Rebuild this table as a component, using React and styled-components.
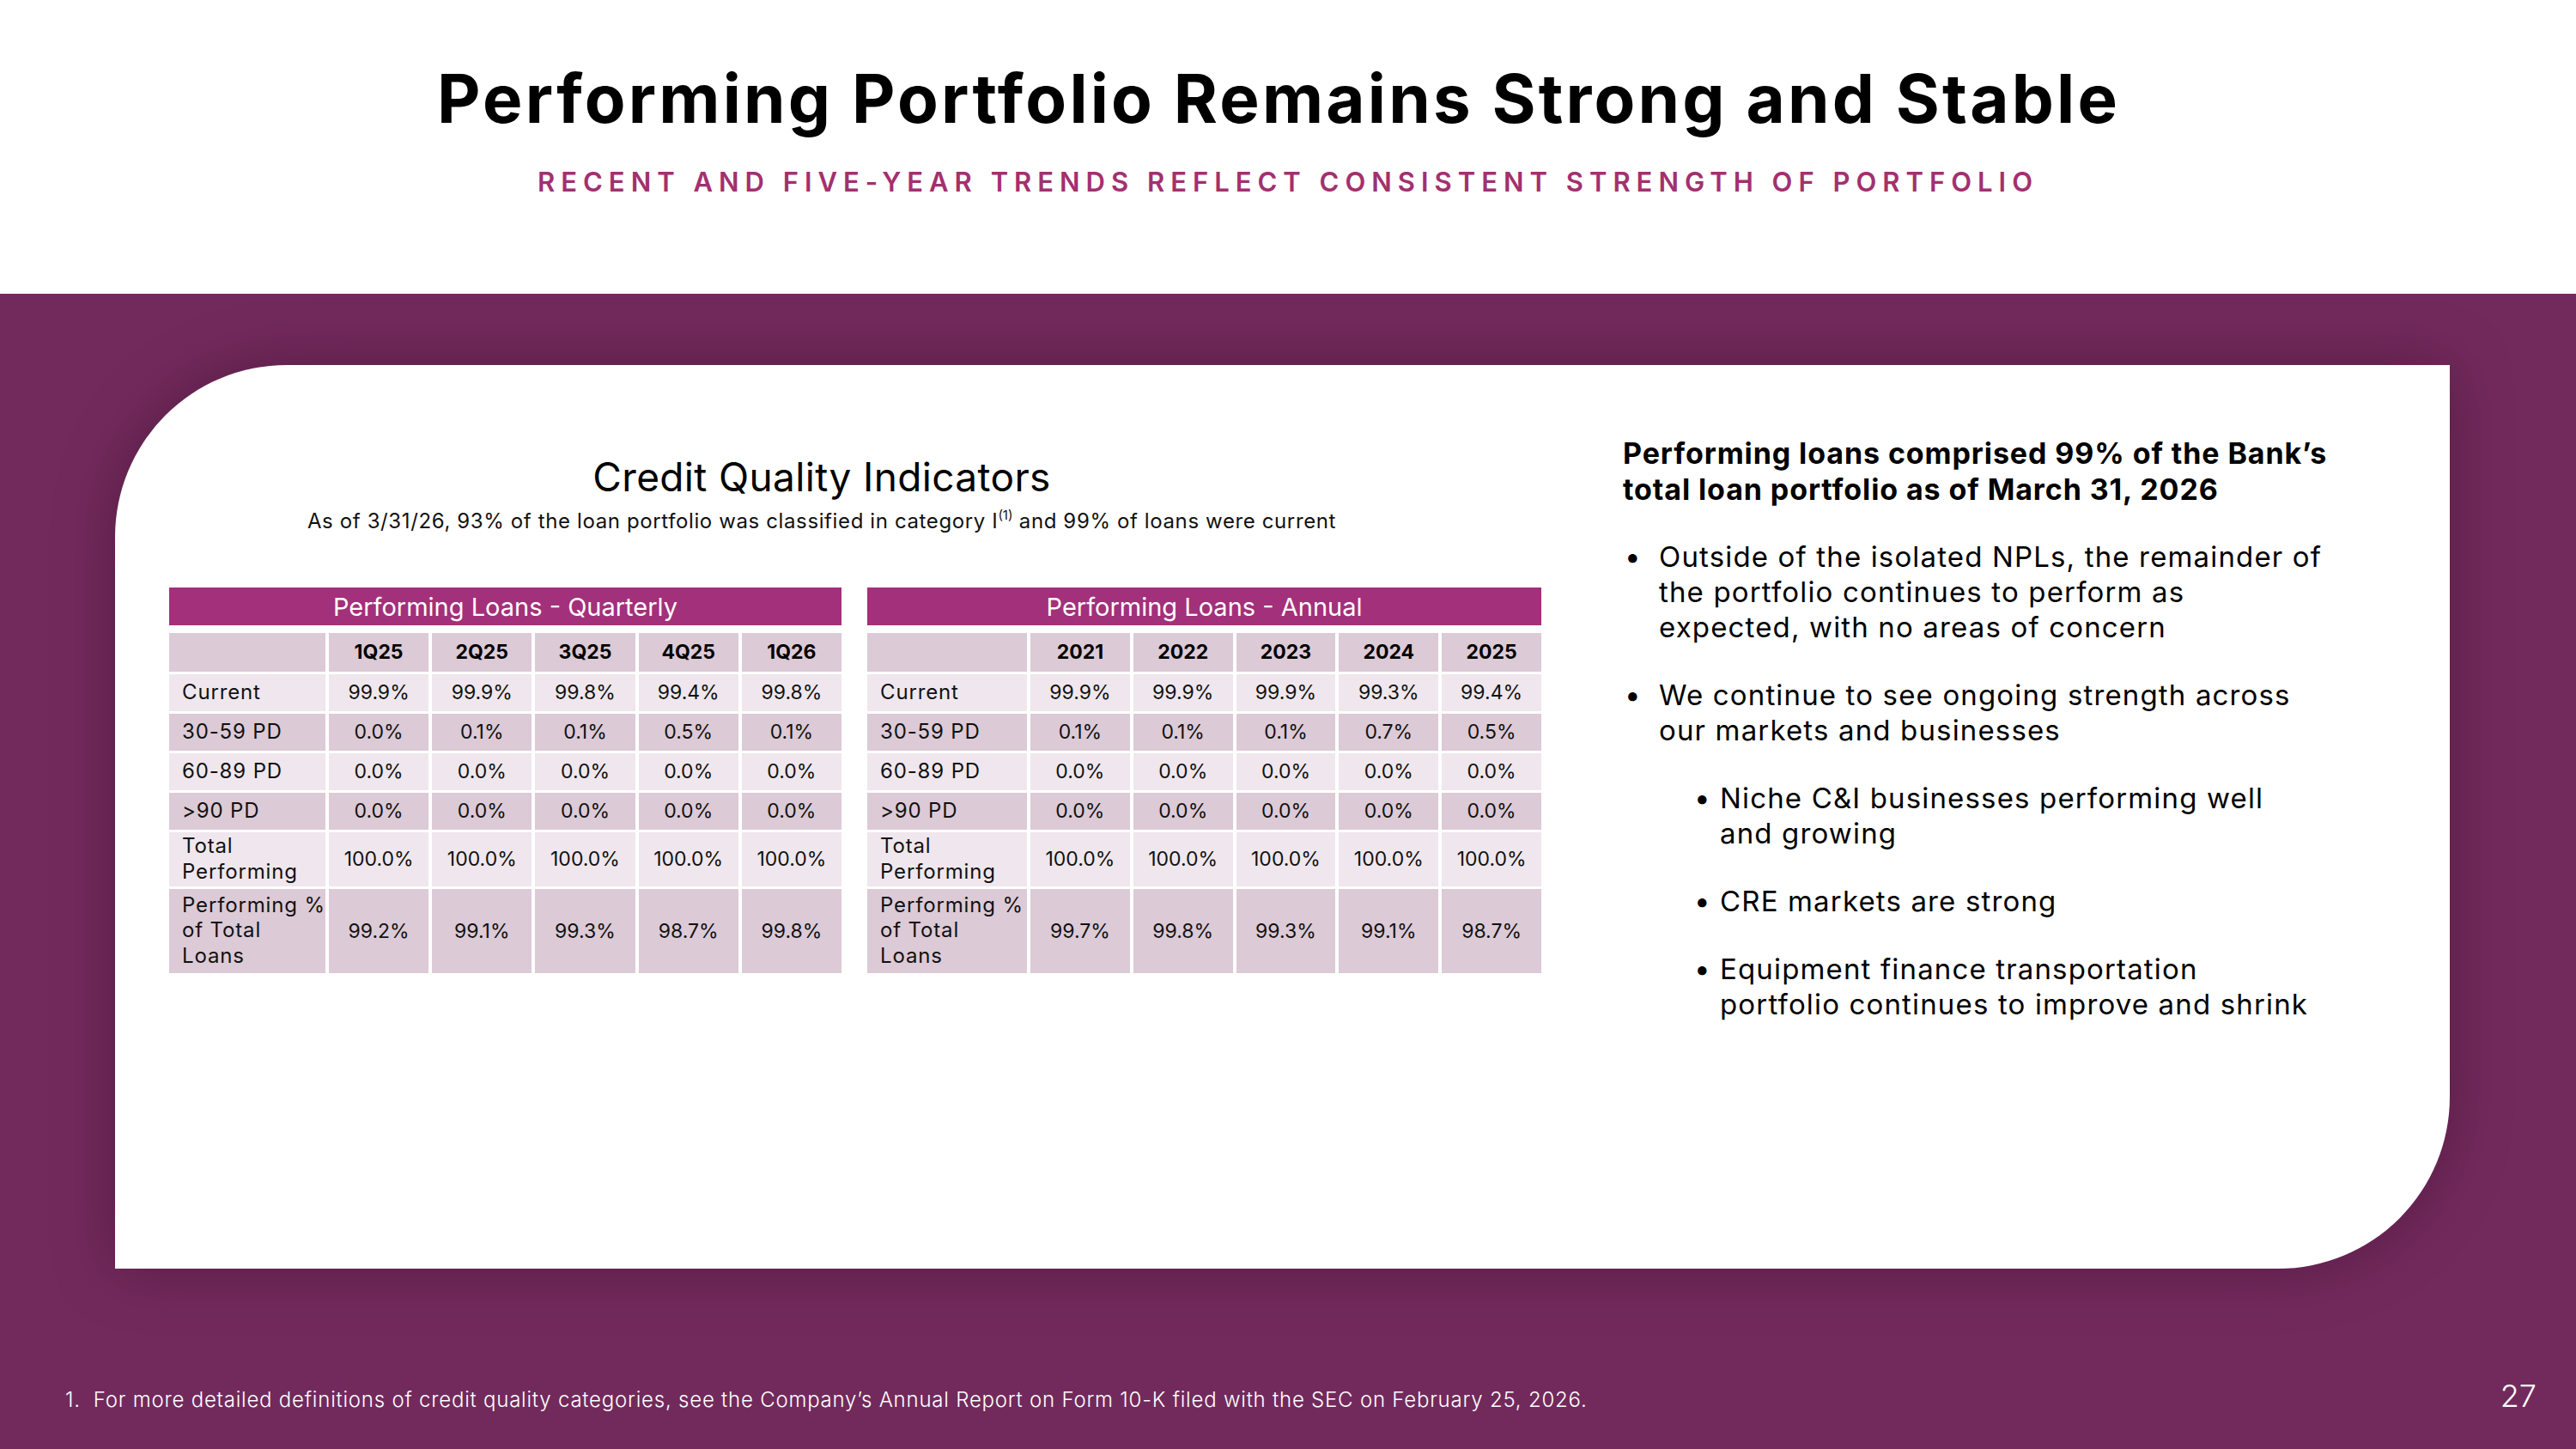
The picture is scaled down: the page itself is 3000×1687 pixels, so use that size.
import React from "react";
import styled, { createGlobalStyle } from "styled-components";

const GlobalStyle = createGlobalStyle`
  html, body { margin: 0; padding: 0; }
  body {
    width: 3000px;
    height: 1687px;
    overflow: hidden;
    background: #ffffff;
    font-family: Inter, "Open Sans", "Liberation Sans", sans-serif;
    color: #111;
  }
  * { box-sizing: border-box; }
`;

const Slide = styled.div`
  width: 3000px;
  height: 1687px;
  display: flex;
  flex-direction: column;
  background: #ffffff;
`;

const Header = styled.header`
  height: 342px;
  display: flex;
  flex-direction: column;
  align-items: center;
  padding-top: 69px;
`;

const Title = styled.h1`
  margin: 0 22px 0 0;
  font-family: Inter, sans-serif;
  font-weight: 700;
  font-size: 78px;
  line-height: 92px;
  letter-spacing: 3.2px;
  color: #000;
`;

const Subtitle = styled.p`
  margin: 31px 0 0;
  font-family: Inter, sans-serif;
  font-weight: 600;
  font-size: 31px;
  line-height: 40px;
  letter-spacing: 7px;
  color: #a3306f;
`;

const Band = styled.section`
  flex: 1;
  display: flex;
  flex-direction: column;
  background: #722a5c;
  padding-top: 83px;
`;

const Card = styled.div`
  margin: 0 147px 0 134px;
  height: 1052px;
  background: #ffffff;
  border-radius: 200px 0 200px 0;
  box-shadow: 0 0 70px rgba(40, 5, 30, 0.35);
  display: grid;
  grid-template-columns: 1598px 1fr;
  column-gap: 95px;
  padding-left: 63px;
`;

const LeftPane = styled.div`
  display: flex;
  flex-direction: column;
  padding-top: 104px;
`;

const PaneHeading = styled.div`
  display: flex;
  flex-direction: column;
  align-items: center;
  padding-right: 78px;
`;

const PaneTitle = styled.h2`
  margin: 0;
  font-family: Inter, sans-serif;
  font-weight: 400;
  font-size: 46px;
  line-height: 52px;
  letter-spacing: 0.35px;
  color: #000;
`;

const PaneNote = styled.p`
  margin: 11px 0 0;
  font-family: Inter, sans-serif;
  font-weight: 400;
  font-size: 24px;
  line-height: 30px;
  letter-spacing: 0.62px;
  color: #111;

  sup {
    font-size: 15px;
    line-height: 0;
    vertical-align: 10px;
    letter-spacing: 0;
  }
`;

const Tables = styled.div`
  margin-top: 62px;
  display: flex;
  gap: 30px;
`;

const TableGrid = styled.div`
  width: ${(p) => p.$width}px;
  display: grid;
  grid-template-columns: ${(p) => p.$labelWidth}px repeat(5, 1fr);
  grid-template-rows: 50px 45px repeat(4, 43px) 63px 98px;
  column-gap: 4px;
  row-gap: 3px;
  font-family: Inter, sans-serif;
  font-size: 23px;
  line-height: 29px;
  color: #111;
`;

const Banner = styled.div`
  grid-column: 1 / -1;
  margin-bottom: 6px;
  display: flex;
  align-items: center;
  justify-content: center;
  background: #a3307a;
  color: #ffffff;
  font-size: 29px;
  font-weight: 400;
`;

const Cell = styled.div`
  padding: ${(p) => (p.$label ? "0 2px 2px 15px" : "0 2px")};
  display: flex;
  flex-direction: column;
  align-items: ${(p) => (p.$label ? "flex-start" : "center")};
  justify-content: center;
  background: ${(p) => (p.$shade ? "#dccad6" : "#efe7ed")};
  font-size: ${(p) => (p.$label ? "24px" : "23px")};
  line-height: ${(p) => (p.$label ? "29.5px" : "29px")};
  letter-spacing: ${(p) => (p.$label ? "0.85px" : "0")};
  font-weight: ${(p) => (p.$bold ? 700 : 400)};
  color: ${(p) => (p.$bold ? "#000" : "#111")};
  white-space: nowrap;
`;

const RightPane = styled.div`
  padding-top: 82px;
  font-family: Inter, sans-serif;
  color: #000;
`;

const Lead = styled.p`
  margin: 0;
  font-weight: 700;
  font-size: 34px;
  line-height: 42px;
  letter-spacing: 0.9px;
`;

const BulletList = styled.ul`
  list-style: none;
  margin: 37px 0 0;
  padding: 0;
  display: flex;
  flex-direction: column;
  gap: 38px;
`;

const Bullet = styled.li`
  position: relative;
  padding-left: ${(p) => (p.$sub ? 113 : 42)}px;
  font-size: 33px;
  line-height: 41px;
  letter-spacing: 1.15px;
  font-weight: 400;
  white-space: nowrap;

  &::before {
    content: "•";
    position: absolute;
    left: ${(p) => (p.$sub ? 83 : 2)}px;
    top: 0;
  }
`;

const Footer = styled.footer`
  margin-top: auto;
  padding: 0 46px 40px 76px;
  display: flex;
  justify-content: space-between;
  align-items: baseline;
  color: #ffffff;
  font-family: Inter, sans-serif;
`;

const FootNote = styled.p`
  margin: 0;
  font-size: 24px;
  font-weight: 300;
  line-height: 30px;
  letter-spacing: 0.78px;
`;

const PageNumber = styled.span`
  font-size: 36px;
  font-weight: 300;
`;

const quarterly = {
  title: "Performing Loans - Quarterly",
  cols: ["1Q25", "2Q25", "3Q25", "4Q25", "1Q26"],
  rows: [
    [["Current"], "99.9%", "99.9%", "99.8%", "99.4%", "99.8%"],
    [["30-59 PD"], "0.0%", "0.1%", "0.1%", "0.5%", "0.1%"],
    [["60-89 PD"], "0.0%", "0.0%", "0.0%", "0.0%", "0.0%"],
    [[">90 PD"], "0.0%", "0.0%", "0.0%", "0.0%", "0.0%"],
    [["Total", "Performing"], "100.0%", "100.0%", "100.0%", "100.0%", "100.0%"],
    [["Performing %", "of Total", "Loans"], "99.2%", "99.1%", "99.3%", "98.7%", "99.8%"],
  ],
};

const annual = {
  title: "Performing Loans - Annual",
  cols: ["2021", "2022", "2023", "2024", "2025"],
  rows: [
    [["Current"], "99.9%", "99.9%", "99.9%", "99.3%", "99.4%"],
    [["30-59 PD"], "0.1%", "0.1%", "0.1%", "0.7%", "0.5%"],
    [["60-89 PD"], "0.0%", "0.0%", "0.0%", "0.0%", "0.0%"],
    [[">90 PD"], "0.0%", "0.0%", "0.0%", "0.0%", "0.0%"],
    [["Total", "Performing"], "100.0%", "100.0%", "100.0%", "100.0%", "100.0%"],
    [["Performing %", "of Total", "Loans"], "99.7%", "99.8%", "99.3%", "99.1%", "98.7%"],
  ],
};

function LoanTable({ data, width, labelWidth }) {
  return (
    <TableGrid $width={width} $labelWidth={labelWidth}>
      <Banner>{data.title}</Banner>
      <Cell $label $shade />
      {data.cols.map((c) => (
        <Cell key={c} $shade $bold>
          {c}
        </Cell>
      ))}
      {data.rows.map(([label, ...values], i) => {
        const shade = i % 2 === 1;
        return (
          <React.Fragment key={i}>
            <Cell $label $shade={shade}>
              {label.map((line) => (
                <span key={line}>{line}</span>
              ))}
            </Cell>
            {values.map((v, j) => (
              <Cell key={j} $shade={shade}>
                {v}
              </Cell>
            ))}
          </React.Fragment>
        );
      })}
    </TableGrid>
  );
}

export default function App() {
  return (
    <>
      <GlobalStyle />
      <Slide>
        <Header>
          <Title>Performing Portfolio Remains Strong and Stable</Title>
          <Subtitle>RECENT AND FIVE-YEAR TRENDS REFLECT CONSISTENT STRENGTH OF PORTFOLIO</Subtitle>
        </Header>
        <Band>
          <Card>
            <LeftPane>
              <PaneHeading>
                <PaneTitle>Credit Quality Indicators</PaneTitle>
                <PaneNote>
                  As of 3/31/26, 93% of the loan portfolio was classified in category I<sup>(1)</sup> and 99% of loans were current
                </PaneNote>
              </PaneHeading>
              <Tables>
                <LoanTable data={quarterly} width={783} labelWidth={182} />
                <LoanTable data={annual} width={785} labelWidth={186} />
              </Tables>
            </LeftPane>
            <RightPane>
              <Lead>
                Performing loans comprised 99% of the Bank’s
                <br />
                total loan portfolio as of March 31, 2026
              </Lead>
              <BulletList>
                <Bullet>
                  Outside of the isolated NPLs, the remainder of
                  <br />
                  the portfolio continues to perform as
                  <br />
                  expected, with no areas of concern
                </Bullet>
                <Bullet>
                  We continue to see ongoing strength across
                  <br />
                  our markets and businesses
                </Bullet>
                <Bullet $sub>
                  Niche C&amp;I businesses performing well
                  <br />
                  and growing
                </Bullet>
                <Bullet $sub>CRE markets are strong</Bullet>
                <Bullet $sub>
                  Equipment finance transportation
                  <br />
                  portfolio continues to improve and shrink
                </Bullet>
              </BulletList>
            </RightPane>
          </Card>
          <Footer>
            <FootNote>
              1.&nbsp; For more detailed definitions of credit quality categories, see the Company’s Annual Report on Form 10-K filed with the SEC on February 25, 2026.
            </FootNote>
            <PageNumber>27</PageNumber>
          </Footer>
        </Band>
      </Slide>
    </>
  );
}
